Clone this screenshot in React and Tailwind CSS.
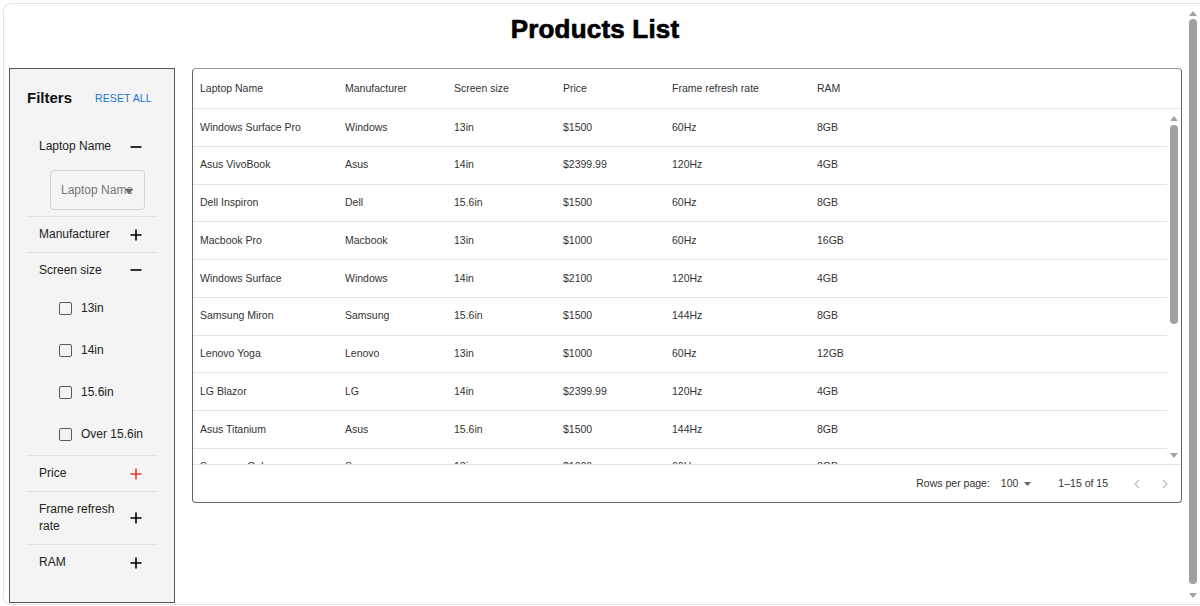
import { useState } from "react";

const products = [
  ["Windows Surface Pro", "Windows", "13in", "$1500", "60Hz", "8GB"],
  ["Asus VivoBook", "Asus", "14in", "$2399.99", "120Hz", "4GB"],
  ["Dell Inspiron", "Dell", "15.6in", "$1500", "60Hz", "8GB"],
  ["Macbook Pro", "Macbook", "13in", "$1000", "60Hz", "16GB"],
  ["Windows Surface", "Windows", "14in", "$2100", "120Hz", "4GB"],
  ["Samsung Miron", "Samsung", "15.6in", "$1500", "144Hz", "8GB"],
  ["Lenovo Yoga", "Lenovo", "13in", "$1000", "60Hz", "12GB"],
  ["LG Blazor", "LG", "14in", "$2399.99", "120Hz", "4GB"],
  ["Asus Titanium", "Asus", "15.6in", "$1500", "144Hz", "8GB"],
  ["Samsung Galaxy", "Samsung", "13in", "$1000", "60Hz", "8GB"],
  ["HP Pavilion", "HP", "14in", "$1500", "120Hz", "8GB"],
];

const headers = ["Laptop Name", "Manufacturer", "Screen size", "Price", "Frame refresh rate", "RAM"];
const colWidths = ["w-[145px]", "w-[109px]", "w-[109px]", "w-[109px]", "w-[145px]", "flex-1"];

function PlusIcon({ className = "text-black" }) {
  return (
    <svg width="14" height="14" viewBox="0 0 14 14" className={className}>
      <path d="M7 1.5v11M1.5 7h11" stroke="currentColor" strokeWidth="1.6" fill="none" />
    </svg>
  );
}

function MinusIcon() {
  return (
    <svg width="14" height="14" viewBox="0 0 14 14" className="text-black">
      <path d="M1.5 7h11" stroke="currentColor" strokeWidth="1.6" fill="none" />
    </svg>
  );
}

// row heights follow the reference's divider positions
function FilterRow({ label, open, red, h = "h-[35px]" }) {
  return (
    <div className={`flex items-center pl-[12px] pr-[14px] ${h}`}>
      <span className="w-[88px] text-[12px] leading-[17px] text-[#222]">{label}</span>
      <span className="ml-auto flex">
        {open ? <MinusIcon /> : <PlusIcon className={red ? "text-[#e53935]" : "text-black"} />}
      </span>
    </div>
  );
}

function Divider() {
  return <div className="h-px bg-[#e2e2e2]" />;
}

function Checkbox({ label }) {
  const [checked, setChecked] = useState(false);
  return (
    <label className="flex items-center h-[42px] pl-[32px] cursor-pointer">
      <span
        onClick={() => setChecked(!checked)}
        className={`w-[13px] h-[13px] border-[1.5px] border-[#5a5a5a] rounded-[2px] ${checked ? "bg-[#1976d2]" : "bg-transparent"}`}
      />
      <span className="ml-[9px] text-[12px] text-[#222]">{label}</span>
    </label>
  );
}

function Sidebar() {
  return (
    <div className="w-[166px] h-[535px] border border-[#555] bg-[#f4f4f4] px-[17px]">
      <div className="h-[59px] flex items-center">
        <span className="text-[15px] font-bold text-[#111]">Filters</span>
        <span className="ml-[23px] text-[10.5px] text-[#1976d2] uppercase tracking-[0.1px]">Reset all</span>
      </div>
      <div className="w-[130px]">
        <FilterRow label="Laptop Name" open h="h-[37px]" />
        <div className="ml-[23px] mt-[5px] mb-[6px] relative w-[95px] h-[40px] border border-[#d4d4d4] rounded-[4px] flex items-center pl-[10px]">
          <span className="text-[12px] text-[#777]">Laptop Name</span>
          <svg width="8" height="5" viewBox="0 0 8 5" className="absolute right-[11px] top-[18px]">
            <path d="M0 0h8L4 5z" fill="#666" />
          </svg>
        </div>
        <Divider />
        <FilterRow label="Manufacturer" />
        <Divider />
        <FilterRow label="Screen size" open h="h-[34px]" />
        <Checkbox label="13in" />
        <Checkbox label="14in" />
        <Checkbox label="15.6in" />
        <Checkbox label="Over 15.6in" />
        <Divider />
        <FilterRow label="Price" red />
        <Divider />
        <FilterRow label="Frame refresh rate" h="h-[52px]" />
        <Divider />
        <FilterRow label="RAM" />
      </div>
    </div>
  );
}

function ScrollBar({ thumbTop, thumbHeight, height }) {
  return (
    <div className="w-[14px] flex flex-col items-center" style={{ height }}>
      <svg width="8" height="5" viewBox="0 0 8 5" className="mt-[7px]">
        <path d="M4 0L8 5H0z" fill="#a3a3a3" />
      </svg>
      <div className="flex-1 w-full flex flex-col items-center">
        <div style={{ marginTop: thumbTop, height: thumbHeight }} className="w-[8px] rounded-full bg-[#a0a0a0]" />
      </div>
      <svg width="8" height="5" viewBox="0 0 8 5" className="mb-[6px]">
        <path d="M0 0h8L4 5z" fill="#a3a3a3" />
      </svg>
    </div>
  );
}

function ProductsTable() {
  return (
    <div className="w-[990px] h-[435px] border border-[#666] border-t-[#9a9a9a] rounded-[4px] flex flex-col bg-white">
      <div className="h-[40px] flex items-center border-b border-[#e4e4e4] pl-[7px] text-[10.5px] text-[#333]">
        {headers.map((h, i) => (
          <div key={h} className={colWidths[i]}>{h}</div>
        ))}
      </div>
      <div className="h-[355px] flex overflow-hidden">
        <div className="flex-1 overflow-hidden">
          {products.map((p) => (
            <div
              key={p[0]}
              className="h-[37.75px] flex items-center border-b border-[#e4e4e4] pl-[7px] text-[10.5px] text-[#333]"
            >
              {p.map((c, i) => (
                <div key={i} className={colWidths[i]}>{c}</div>
              ))}
            </div>
          ))}
        </div>
        <ScrollBar thumbTop={4} thumbHeight={199} height={355} />
      </div>
      <div className="h-[38px] border-t border-[#e4e4e4] flex items-center justify-end text-[10.5px] text-[#333] pr-[12px]">
        <span>Rows per page:</span>
        <span className="ml-[11px]">100</span>
        <svg width="7" height="4" viewBox="0 0 7 4" className="ml-[6px]">
          <path d="M0 0h7L3.5 4z" fill="#666" />
        </svg>
        <span className="ml-[27px]">1–15 of 15</span>
        <svg width="8" height="10" viewBox="0 0 8 10" className="ml-[25px]">
          <path d="M6 1L2 5l4 4" stroke="#bdbdbd" strokeWidth="1.3" fill="none" />
        </svg>
        <svg width="8" height="10" viewBox="0 0 8 10" className="ml-[20px]">
          <path d="M2 1l4 4-4 4" stroke="#bdbdbd" strokeWidth="1.3" fill="none" />
        </svg>
      </div>
    </div>
  );
}

export default function App() {
  return (
    <div
      className="w-[1200px] h-[606px] bg-white overflow-hidden pt-[3px] pl-[3px]"
      style={{ fontFamily: '"Liberation Sans", Arial, sans-serif' }}
    >
      <div className="h-[602px] flex border border-r-0 border-[#e3e3e3] rounded-l-[8px]">
        <div className="flex-1 flex flex-col">
          <h1 className="pt-[10px] h-[40px] text-center text-[26px] leading-[30px] font-black text-black tracking-[0.2px] [-webkit-text-stroke:0.7px_black]">
            Products List
          </h1>
          <div className="mt-[24px] flex items-start pl-[5px] gap-[17px]">
            <Sidebar />
            <ProductsTable />
          </div>
        </div>
        <ScrollBar thumbTop={3} thumbHeight={565} height={600} />
      </div>
    </div>
  );
}
